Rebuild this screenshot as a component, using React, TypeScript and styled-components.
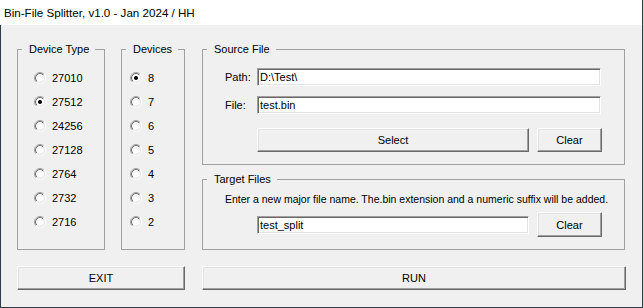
import React, { useId } from 'react';
import styled, { createGlobalStyle } from 'styled-components';

const GlobalStyle = createGlobalStyle`
  html, body {
    margin: 0;
    padding: 0;
    background: #f0f0f0;
  }

  body {
    font-family: "Liberation Sans", Arial, sans-serif;
    font-size: 11px;
    color: #000;
  }
`;

const Window = styled.div`
  width: 643px;
  height: 308px;
  box-sizing: border-box;
  display: flex;
  flex-direction: column;
  background: #f0f0f0;
  border-right: 1px solid #2e3c4b;
  border-bottom: 1px solid #2e3c4b;
`;

const TitleBar = styled.div`
  height: 25px;
  flex-shrink: 0;
  display: flex;
  align-items: center;
  padding-left: 4px;
  background: #fff;
  font-size: 11.6px;
`;

const Body = styled.div`
  flex: 1;
  display: flex;
  flex-direction: column;
  padding: 18px 0 0 16px;
  border-left: 1px solid #2e3c4b;
`;

const TopRow = styled.div`
  display: flex;
  align-items: flex-start;
`;

const Group = styled.fieldset<{ $w: number; $h: number; $ml?: number; $mt?: number }>`
  box-sizing: border-box;
  width: ${(p) => p.$w}px;
  height: ${(p) => p.$h}px;
  margin: ${(p) => p.$mt || 0}px 0 0 ${(p) => p.$ml || 0}px;
  padding: 0;
  min-width: 0;
  border: 1px solid #a0a0a0;
`;

const Legend = styled.legend`
  margin-left: 4px;
  padding: 0 6px 0 7px;
  line-height: 13px;
  font-size: 11px;
`;

const RadioList = styled.div<{ $pl: number }>`
  display: flex;
  flex-direction: column;
  padding: 10px 0 0 ${(p) => p.$pl}px;
`;

const RadioRow = styled.label`
  height: 24px;
  display: flex;
  align-items: center;
  gap: 6px;
`;

const RightCol = styled.div`
  width: 423px;
  margin-left: 17px;
  display: flex;
  flex-direction: column;
`;

const GroupInner = styled.div<{ $pt: number }>`
  display: flex;
  flex-direction: column;
  padding: ${(p) => p.$pt}px 21px 0 22px;
`;

const FieldRow = styled.div<{ $mt?: number }>`
  display: flex;
  align-items: center;
  margin-top: ${(p) => p.$mt || 0}px;
`;

const FieldLabel = styled.span`
  width: 32px;
  flex-shrink: 0;
`;

const TextBox = styled.input<{ $w: number }>`
  box-sizing: border-box;
  width: ${(p) => p.$w}px;
  height: 18px;
  margin: 0;
  padding: 0 2px;
  background: #fff;
  font-family: "Liberation Sans", Arial, sans-serif;
  font-size: 11px;
  color: #000;
  border: 1px solid;
  border-color: #a0a0a0 #fff #fff #a0a0a0;
  box-shadow: inset 1px 1px 0 #696969, inset -1px -1px 0 #e3e3e3;
  outline: none;
`;

const ButtonRow = styled.div<{ $mt: number; $pl?: number }>`
  display: flex;
  align-items: center;
  gap: 8px;
  margin-top: ${(p) => p.$mt}px;
  padding-left: ${(p) => p.$pl || 0}px;
`;

const Hint = styled.div`
  line-height: 13px;
  font-size: 10.5px;
  white-space: nowrap;
`;

const Button = styled.button<{ $w: number; $h?: number }>`
  box-sizing: border-box;
  width: ${(p) => p.$w}px;
  height: ${(p) => p.$h || 24}px;
  margin: 0;
  padding: 0;
  background: #f0f0f0;
  font-family: "Liberation Sans", Arial, sans-serif;
  font-size: 11px;
  color: #000;
  border: 1px solid;
  border-color: #fff #696969 #696969 #fff;
  box-shadow: inset -1px -1px 0 #a0a0a0, inset 1px 1px 0 #e3e3e3;
`;

const BottomRow = styled.div`
  display: flex;
  gap: 17px;
  margin-top: 16px;
`;

const RadioMark = ({ checked }: { checked?: boolean }) => {
  const id = useId().replace(/:/g, '');
  return (
    <svg width="12" height="12" viewBox="0 0 12 12">
      <defs>
        <linearGradient id={`o${id}`} x1="0" y1="0" x2="1" y2="1">
          <stop offset="0.5" stopColor="#a0a0a0" />
          <stop offset="0.5" stopColor="#ffffff" />
        </linearGradient>
        <linearGradient id={`i${id}`} x1="0" y1="0" x2="1" y2="1">
          <stop offset="0.5" stopColor="#696969" />
          <stop offset="0.5" stopColor="#e3e3e3" />
        </linearGradient>
      </defs>
      <circle cx="6" cy="6" r="5.5" fill="none" stroke={`url(#o${id})`} />
      <circle cx="6" cy="6" r="4.5" fill="#fff" stroke={`url(#i${id})`} />
      {checked && <circle cx="6" cy="6" r="2" fill="#000" />}
    </svg>
  );
};

const deviceTypes = ['27010', '27512', '24256', '27128', '2764', '2732', '2716'];
const deviceCounts = ['8', '7', '6', '5', '4', '3', '2'];

const App = () => {
  return (
    <>
      <GlobalStyle />
      <Window>
        <TitleBar>Bin-File Splitter, v1.0 - Jan 2024 / HH</TitleBar>
        <Body>
          <TopRow>
            <Group $w={88} $h={207}>
              <Legend>Device Type</Legend>
              <RadioList $pl={16}>
                {deviceTypes.map((t) => (
                  <RadioRow key={t}>
                    <RadioMark checked={t === '27512'} />
                    {t}
                  </RadioRow>
                ))}
              </RadioList>
            </Group>
            <Group $w={64} $h={207} $ml={16}>
              <Legend>Devices</Legend>
              <RadioList $pl={8}>
                {deviceCounts.map((c) => (
                  <RadioRow key={c}>
                    <RadioMark checked={c === '8'} />
                    {c}
                  </RadioRow>
                ))}
              </RadioList>
            </Group>
            <RightCol>
              <Group $w={423} $h={122}>
                <Legend>Source File</Legend>
                <GroupInner $pt={12}>
                  <FieldRow>
                    <FieldLabel>Path:</FieldLabel>
                    <TextBox $w={344} defaultValue="D:\Test\" />
                  </FieldRow>
                  <FieldRow $mt={10}>
                    <FieldLabel>File:</FieldLabel>
                    <TextBox $w={344} defaultValue="test.bin" />
                  </FieldRow>
                  <ButtonRow $mt={14} $pl={32}>
                    <Button $w={272}>Select</Button>
                    <Button $w={65}>Clear</Button>
                  </ButtonRow>
                </GroupInner>
              </Group>
              <Group $w={423} $h={77} $mt={8}>
                <Legend>Target Files</Legend>
                <GroupInner $pt={7}>
                  <Hint>
                    Enter a new major file name. The.bin extension and a numeric suffix will be
                    added.
                  </Hint>
                  <ButtonRow $mt={6} $pl={32}>
                    <TextBox $w={272} defaultValue="test_split" />
                    <Button $w={65} $h={25}>
                      Clear
                    </Button>
                  </ButtonRow>
                </GroupInner>
              </Group>
            </RightCol>
          </TopRow>
          <BottomRow>
            <Button $w={168}>EXIT</Button>
            <Button $w={424}>RUN</Button>
          </BottomRow>
        </Body>
      </Window>
    </>
  );
};

export default App;
